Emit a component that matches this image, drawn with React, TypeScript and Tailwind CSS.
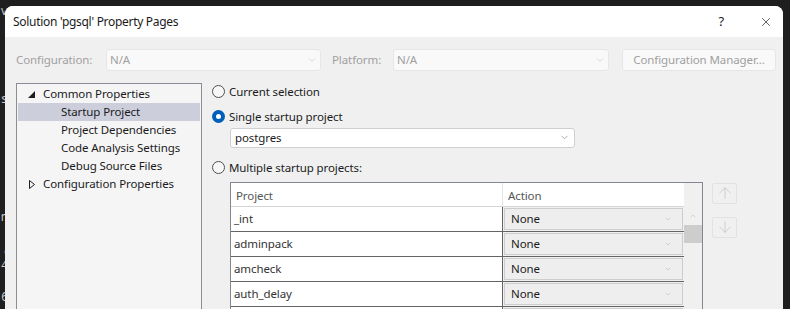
import { ArrowUp, ArrowDown, ChevronDown, ChevronUp, X } from 'lucide-react'

const projects = ['_int', 'adminpack', 'amcheck', 'auth_delay', 'auto_explain', 'bloom']

const treeItems = [
  { label: 'Common Properties', depth: 0, arrow: 'open' },
  { label: 'Startup Project', depth: 1, selected: true },
  { label: 'Project Dependencies', depth: 1 },
  { label: 'Code Analysis Settings', depth: 1 },
  { label: 'Debug Source Files', depth: 1 },
  { label: 'Configuration Properties', depth: 0, arrow: 'closed' },
]

function Radio({ checked, label }: { checked?: boolean; label: string }) {
  return (
    <div className="flex items-center h-[18px]">
      {checked ? (
        <span className="w-[13px] h-[13px] rounded-full bg-[#005fb8] flex items-center justify-center">
          <span className="w-[5px] h-[5px] rounded-full bg-white" />
        </span>
      ) : (
        <span className="w-[13px] h-[13px] rounded-full border border-[#4f4f4f] bg-[#f7f7f7]" />
      )}
      <span className="ml-[4px] text-[#1b1b1b]">{label}</span>
    </div>
  )
}

export default function App() {
  return (
    <div
      className="w-[790px] h-[309px] bg-[#1f1f1f] overflow-hidden flex text-[11.5px] tracking-[-0.1px]"
      style={{ fontFamily: '"Noto Sans", "Open Sans", sans-serif' }}
    >
      {/* editor behind the dialog */}
      <div className="w-[5px] overflow-hidden flex flex-col items-end text-[12px] text-[#c8c8c8] leading-[18px] pt-[2px] shrink-0">
        <span className="-mr-[2px]">v</span>
        <span className="h-[70px]" />
        <span className="-mr-[2px]">s</span>
        <span className="h-[100px]" />
        <span className="-mr-[3px]">n</span>
        <span className="h-[12px]" />
        <span className="-mr-[2px]">,</span>
        <span className="-mr-[3px]">4</span>
        <span className="h-[14px]" />
        <span className="-mr-[3px]">6</span>
      </div>

      {/* Dialog */}
      <div className="mt-[6px] w-[778px] shrink-0 rounded-t-[8px] overflow-hidden bg-[#f0f0f0] flex flex-col">
        {/* Title bar */}
        <div className="h-[31px] bg-white flex items-center pl-[8px] pr-[10px] shrink-0">
          <span className="text-[12px] tracking-[-0.3px] text-[#1b1b1b]">Solution 'pgsql' Property Pages</span>
          <span className="ml-auto text-[13px] text-[#1b1b1b]">?</span>
          <X className="ml-[35px] w-[14px] h-[14px] text-[#1b1b1b]" strokeWidth={1.2} />
        </div>

        {/* Configuration row */}
        <div className="mt-[11px] pl-[11px] flex items-center h-[23px]">
          <span className="w-[90px] text-[#a0a0a0]">Configuration:</span>
          <div className="w-[215px] h-[22px] bg-[#f9f9f9] border border-[#e6e6e6] rounded-[3px] flex items-center px-[3px]">
            <span className="text-[#a0a0a0]">N/A</span>
            <ChevronDown className="ml-auto w-[10px] h-[10px] text-[#b5b5b5]" strokeWidth={1.2} />
          </div>
          <span className="ml-[11px] w-[61px] text-[#a0a0a0]">Platform:</span>
          <div className="w-[216px] h-[22px] bg-[#f9f9f9] border border-[#e6e6e6] rounded-[3px] flex items-center px-[3px]">
            <span className="text-[#a0a0a0]">N/A</span>
            <ChevronDown className="ml-auto w-[10px] h-[10px] text-[#b5b5b5]" strokeWidth={1.2} />
          </div>
          <div className="ml-[13px] w-[154px] h-[22px] bg-[#f9f9f9] border border-[#e6e6e6] rounded-[3px] flex items-center justify-center text-[#a0a0a0]">
            Configuration Manager...
          </div>
        </div>

        {/* Main area */}
        <div className="mt-[12px] pl-[11px] flex flex-1 min-h-0">
          {/* Tree */}
          <div className="w-[186px] h-[260px] shrink-0 border border-[#8a8d94] bg-[#f5f5f5] pt-[1px] px-[1px]">
            {treeItems.map((item) => (
              <div
                key={item.label}
                className={`h-[18px] flex items-center text-[#1b1b1b] ${item.selected ? 'bg-[#cccedb]' : ''}`}
              >
                <span className="w-[25px] shrink-0 flex justify-end pr-[8px]">
                  {item.arrow === 'open' && (
                    <svg width="7" height="7" viewBox="0 0 7 7">
                      <polygon points="7,0 7,7 0,7" fill="#1e1e1e" />
                    </svg>
                  )}
                  {item.arrow === 'closed' && (
                    <svg width="6" height="9" viewBox="0 0 6 9">
                      <polygon points="0.5,0.5 5.5,4.5 0.5,8.5" fill="none" stroke="#1e1e1e" strokeWidth="1" />
                    </svg>
                  )}
                </span>
                <span className={item.depth === 1 ? 'ml-[18px]' : ''}>{item.label}</span>
              </div>
            ))}
          </div>

          {/* Startup project options */}
          <div className="ml-[10px] flex flex-col">
            <Radio label="Current selection" />
            <div className="mt-[7px]">
              <Radio checked label="Single startup project" />
            </div>
            <div className="mt-[3px] ml-[18px] w-[345px] h-[22px] bg-white border border-[#cfcfcf] rounded-[3px] flex items-center px-[4px] text-[#1b1b1b]">
              postgres
              <ChevronDown className="ml-auto w-[11px] h-[11px] text-[#7a7a7a]" strokeWidth={1.3} />
            </div>
            <div className="mt-[11px]">
              <Radio label="Multiple startup projects:" />
            </div>

            <div className="mt-[5px] ml-[18px] flex">
              {/* Grid */}
              <div className="w-[473px] border border-[#828790] flex">
                <div className="w-[453px] flex flex-col">
                  <div className="h-[24px] flex bg-white border-b border-[#d5d5d5] text-[#555]">
                    <div className="w-[272px] border-r border-[#e3e3e3] flex items-center pl-[5px] pt-[4px]">Project</div>
                    <div className="flex-1 flex items-center pl-[5px] pt-[4px]">Action</div>
                  </div>
                  {projects.map((p) => (
                    <div key={p} className="flex h-[25px] border-b border-[#646464]">
                      <div className="w-[272px] bg-white border-r border-[#646464] flex items-center pl-[3px] text-[#333]">
                        {p}
                      </div>
                      <div className="flex-1 p-[1px]">
                        <div className="h-full bg-[#eeeeee] border border-[#cdcdcd] flex items-center pl-[6px] pr-[10px] text-[#1b1b1b]">
                          None
                          <ChevronDown className="ml-auto w-[8px] h-[8px] text-[#b0b0b0]" strokeWidth={1.5} />
                        </div>
                      </div>
                    </div>
                  ))}
                </div>
                {/* Scrollbar */}
                <div className="w-[18px] bg-[#f0f0f0] flex flex-col">
                  <div className="h-[24px]" />
                  <div className="h-[18px] flex items-center justify-center">
                    <ChevronUp className="w-[8px] h-[8px] text-[#b8b8b8]" strokeWidth={1.5} />
                  </div>
                  <div className="h-[18px] bg-[#cdcdcd]" />
                </div>
              </div>

              {/* Move up / down */}
              <div className="ml-[9px] flex flex-col pt-[1px]">
                <div className="w-[25px] h-[21px] border border-[#e2e2e2] rounded-[2px] flex items-center justify-center">
                  <ArrowUp className="w-[18px] h-[18px] text-[#c2c2c2]" strokeWidth={1} />
                </div>
                <div className="mt-[13px] w-[25px] h-[21px] border border-[#e2e2e2] rounded-[2px] flex items-center justify-center">
                  <ArrowDown className="w-[18px] h-[18px] text-[#c2c2c2]" strokeWidth={1} />
                </div>
              </div>
            </div>
          </div>
        </div>
      </div>

      <div className="flex-1" />
    </div>
  )
}
